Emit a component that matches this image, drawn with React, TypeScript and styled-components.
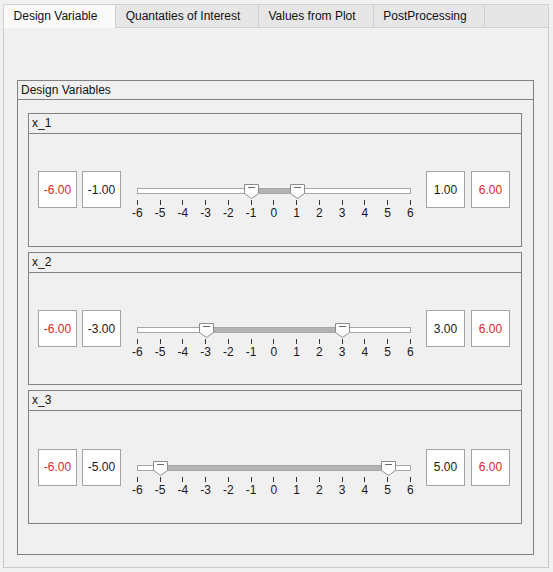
import React from 'react';
import styled, { createGlobalStyle } from 'styled-components';

const GlobalStyle = createGlobalStyle`
  html, body { margin: 0; padding: 0; background: #f0f0f0; }
  body {
    font-family: "Liberation Sans", Arial, sans-serif;
    font-size: 12px;
    color: #1a1a1a;
  }
`;

const Window = styled.div`
  width: 553px;
  height: 572px;
  box-sizing: border-box;
  padding: 4px 4px 0 3px;
  background: #f0f0f0;
`;

const TabBar = styled.div`
  display: flex;
  height: 24px;
  box-sizing: border-box;
  border-top: 1px solid #d0d0d0;
`;

const Tab = styled.div<{ $w: number; $selected?: boolean }>`
  width: ${(p) => p.$w}px;
  box-sizing: border-box;
  display: flex;
  align-items: center;
  justify-content: center;
  padding-right: 8px;
  border-left: 1px solid #d0d0d0;
  border-bottom: 1px solid ${(p) => (p.$selected ? 'transparent' : '#d0d0d0')};
  background: ${(p) => (p.$selected ? '#fafafa' : '#e6e6e6')};
  color: #111;
  white-space: nowrap;
`;

const TabFiller = styled.div`
  flex: 1;
  border-left: 1px solid #d0d0d0;
  border-right: 1px solid #d0d0d0;
  border-bottom: 1px solid #d0d0d0;
  background: #e6e6e6;
`;

const Panel = styled.div`
  height: 540px;
  box-sizing: border-box;
  border: 1px solid #cacaca;
  border-top: none;
  padding: 52px 14px 12px 13px;
  display: flex;
  flex-direction: column;
`;

const GroupBox = styled.div`
  flex: 1;
  display: flex;
  flex-direction: column;
  box-sizing: border-box;
  border: 1px solid #828282;
  min-height: 0;
`;

const GroupHeader = styled.div<{ $h: number }>`
  height: ${(p) => p.$h}px;
  line-height: ${(p) => p.$h}px;
  padding-left: 3px;
  border-bottom: 1px solid #828282;
  color: #111;
`;

const GroupBody = styled.div`
  flex: 1;
  display: flex;
  flex-direction: column;
  gap: 5px;
  padding: 13px 11px 30px 10px;
  min-height: 0;
`;

const VarBox = styled(GroupBox)``;

const VarContent = styled.div`
  flex: 1;
  display: flex;
  align-items: center;
  padding-left: 9px;
`;

const FieldGroup = styled.div<{ $gap: number; $ml?: number }>`
  display: flex;
  gap: ${(p) => p.$gap}px;
  margin-left: ${(p) => p.$ml ?? 0}px;
`;

const ValueBox = styled.div<{ $red?: boolean }>`
  width: 39px;
  height: 37px;
  box-sizing: border-box;
  border: 1px solid #a3a3a3;
  background: #fff;
  display: flex;
  align-items: center;
  justify-content: center;
  color: ${(p) => (p.$red ? '#d9262c' : '#1a1a1a')};
`;

const SliderBlock = styled.div`
  margin-left: 5px;
  width: 296px;
  padding-top: 28px;
  display: flex;
  flex-direction: column;
`;

const Track = styled.div`
  position: relative;
  margin-left: 11px;
  width: 274px;
  height: 6px;
  box-sizing: border-box;
  border: 1px solid #a6a6a6;
  background: #fff;
`;

const RangeFill = styled.div`
  position: absolute;
  top: 0;
  bottom: 0;
  background: #b3b3b3;
`;

const ThumbSvg = styled.svg`
  position: absolute;
  top: -5px;
  width: 15px;
  height: 15px;
  overflow: visible;
`;

const Scale = styled.div`
  display: flex;
  width: 295.75px;
  margin-top: 6px;
`;

const ScaleCell = styled.div`
  flex: 1;
  display: flex;
  flex-direction: column;
  align-items: center;
`;

const Tick = styled.div`
  width: 1px;
  height: 5px;
  background: #333;
`;

const TickLabel = styled.div`
  margin-top: 1px;
  line-height: 14px;
  color: #1a1a1a;
  white-space: nowrap;
`;

const STEP = 22.75;
const centerOf = (v: number) => -0.5 + (v + 6) * STEP;

const Thumb: React.FC<{ value: number }> = ({ value }) => (
  <ThumbSvg viewBox="0 0 15 15" style={{ left: centerOf(value) - 7 }}>
    <path d="M0.5 0.5H14.5V9.5L7.5 14.5L0.5 9.5Z" fill="#fff" stroke="#8c8c8c" />
    <path d="M4 3.5H11" stroke="#6a6a6a" />
  </ThumbSvg>
);

const RangeSlider: React.FC<{ lo: number; hi: number }> = ({ lo, hi }) => {
  const ticks = Array.from({ length: 13 }, (_, i) => i - 6);
  return (
    <SliderBlock>
      <Track>
        <RangeFill style={{ left: centerOf(lo), width: centerOf(hi) - centerOf(lo) }} />
        <Thumb value={lo} />
        <Thumb value={hi} />
      </Track>
      <Scale>
        {ticks.map((t) => (
          <ScaleCell key={t}>
            <Tick />
            <TickLabel>{t}</TickLabel>
          </ScaleCell>
        ))}
      </Scale>
    </SliderBlock>
  );
};

const vars = [
  { name: 'x_1', lo: -1, hi: 1 },
  { name: 'x_2', lo: -3, hi: 3 },
  { name: 'x_3', lo: -5, hi: 5 },
];

export default function App() {
  return (
    <>
      <GlobalStyle />
      <Window>
        <TabBar>
          <Tab $w={112} $selected>Design Variable</Tab>
          <Tab $w={143}>Quantaties of Interest</Tab>
          <Tab $w={115}>Values from Plot</Tab>
          <Tab $w={111}>PostProcessing</Tab>
          <TabFiller />
        </TabBar>
        <Panel>
          <GroupBox>
            <GroupHeader $h={18}>Design Variables</GroupHeader>
            <GroupBody>
              {vars.map((v) => (
                <VarBox key={v.name}>
                  <GroupHeader $h={19}>{v.name}</GroupHeader>
                  <VarContent>
                    <FieldGroup $gap={5}>
                      <ValueBox $red>-6.00</ValueBox>
                      <ValueBox>{v.lo.toFixed(2)}</ValueBox>
                    </FieldGroup>
                    <RangeSlider lo={v.lo} hi={v.hi} />
                    <FieldGroup $gap={6} $ml={4}>
                      <ValueBox>{v.hi.toFixed(2)}</ValueBox>
                      <ValueBox $red>6.00</ValueBox>
                    </FieldGroup>
                  </VarContent>
                </VarBox>
              ))}
            </GroupBody>
          </GroupBox>
        </Panel>
      </Window>
    </>
  );
}
